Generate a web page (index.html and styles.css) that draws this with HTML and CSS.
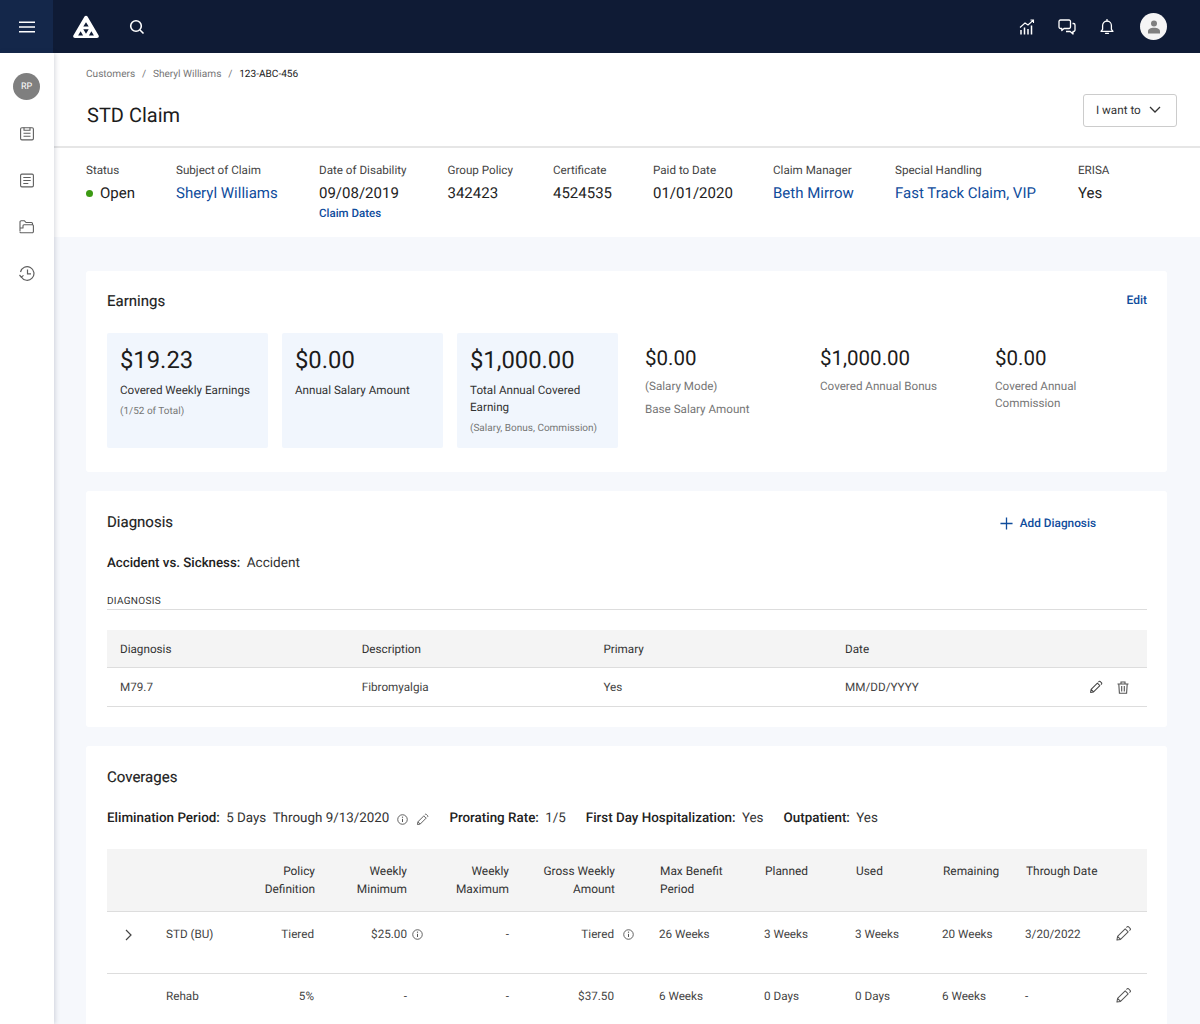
FILE: index.html
```html
<!DOCTYPE html>
<html lang="en">
<head>
<meta charset="utf-8">
<title>STD Claim</title>
<link rel="stylesheet" href="styles.css">
</head>
<body>
<svg class="defs" width="0" height="0" aria-hidden="true">
  <symbol id="pencil" viewBox="0 0 16 16"><path d="M1.800 14.200l.6-3.400 7.200-7.200 2.800 2.800-7.200 7.200zM2.400 10.800l2.800 2.800M10.800 2.400l.8-.8a.7.7 0 0 1 1 0l1.800 1.800a.7.7 0 0 1 0 1l-.8.8" fill="none" stroke="currentColor" stroke-linejoin="round"/></symbol>
  <symbol id="info" viewBox="0 0 12 12"><circle cx="6" cy="6" r="5.200" fill="none" stroke="currentColor" stroke-width="1"/><path d="M6 5.300v3.400" stroke="currentColor" stroke-width="1.100"/><circle cx="6" cy="3.500" r=".7" fill="currentColor"/></symbol>
</svg>
<header class="topbar">
  <div class="menu-cell">
    <svg width="16" height="12" viewBox="0 0 16 12"><path d="M0 1.200h16M0 6h16M0 10.800h16" stroke="#fff" stroke-width="1.500"/></svg>
  </div>
  <svg class="logo" width="26" height="24" viewBox="1 0 26 24"><path d="M14 .8c.7 0 1.200.3 1.500.8l11 18.600c.8 1.300.1 2.800-1.500 2.800H3c-1.600 0-2.300-1.500-1.500-2.800l11-18.600c.3-.5.800-.8 1.500-.8z" fill="#fff"/><path d="M14 7.200l2.700 4.400h-5.400zM11.300 14.200h5.400L14 18.800zM8.600 16.200l2.500 4.300h-5zM19.400 16.200l2.500 4.300h-5z" fill="#0f1b35"/></svg>
  <svg class="search" width="16" height="16" viewBox="0 0 16 16"><circle cx="7" cy="7" r="5.300" fill="none" stroke="#fff" stroke-width="1.600"/><path d="M11 11l3.500 3.500" stroke="#fff" stroke-width="1.600"/></svg>
  <div class="top-actions">
    <svg width="16" height="16" viewBox="0 0 16 16" fill="none" stroke="#fff"><path d="M1 8.500l5-4.500 3 2 5.500-5M11.500 1h3v3" stroke-width="1.100"/><path d="M2 11v4.500M5.500 8.500v7M9 10v5.500M12.500 6.500v9" stroke-width="1.500"/></svg>
    <svg width="18" height="16" viewBox="0 0 18 16" fill="none" stroke="#fff" stroke-width="1.300" stroke-linejoin="round"><path d="M2.500 1h8.500a1.500 1.500 0 0 1 1.500 1.500v5.500A1.500 1.500 0 0 1 11 9.500H6l-2.200 2V9.500H2.500A1.500 1.500 0 0 1 1 8V2.500A1.500 1.500 0 0 1 2.500 1z"/><path d="M14.500 4.500h1a1.500 1.500 0 0 1 1.500 1.500v5a1.500 1.500 0 0 1-1.500 1.500H15v2.500l-2.800-2.500H8"/></svg>
    <svg width="14" height="16" viewBox="0 0 14 16" fill="none" stroke="#fff" stroke-width="1.300"><path d="M1 12.300h12l-1.600-2V6.500a4.400 4.400 0 0 0-8.800 0v3.800z" stroke-linejoin="round"/><path d="M7 .5v1.500M5.500 14.300h3" stroke-linecap="round"/></svg>
    <div class="user-circle">
      <svg width="12" height="14" viewBox="0 0 12 14" fill="#808080"><circle cx="6" cy="3.500" r="3"/><path d="M0 13.500v-2.200C0 9 2.500 7.800 6 7.800s6 1.200 6 3.500v2.200z"/></svg>
    </div>
  </div>
</header>
<div class="shell">
  <nav class="sidebar">
    <div class="avatar">RP</div>
    <svg width="14" height="14" viewBox="0 0 14 14" fill="none" stroke="#5f5f5f" stroke-width="1.100"><rect x=".6" y="1.200" width="12.800" height="12.200" rx="1.300"/><path d="M4 1v2.800h6V1M3.500 6.800h7M3.500 9.800h7"/></svg>
    <svg width="14" height="14" viewBox="0 0 14 14" fill="none" stroke="#5f5f5f" stroke-width="1.100"><rect x=".6" y=".6" width="12.800" height="12.800" rx="1.300"/><path d="M3.300 4h7.400M3.300 7h7.400M3.300 10h5"/></svg>
    <svg width="15" height="14" viewBox="0 0 15 14" fill="none" stroke="#5f5f5f" stroke-width="1.100" stroke-linejoin="round"><path d="M1 12V2.500A1.200 1.200 0 0 1 2.200 1.300h3.300l1.500 1.700h5.500a1 1 0 0 1 1 1v1M1 12.500a.8.800 0 0 0 .8.800h11.400a1.200 1.200 0 0 0 1.200-1.200V6.300a1 1 0 0 0-1-1H5a1 1 0 0 0-1 1v2.200H1"/></svg>
    <svg width="16" height="16" viewBox="0 0 16 16" fill="none" stroke="#5f5f5f" stroke-width="1.200"><path d="M2.300 11.500A6.800 6.800 0 1 0 1.500 6.500"/><path d="M8.500 4v4.300h3.500M.5 9.500l1.800 2.200 2.200-1.800"/></svg>
  </nav>
  <main class="main">
    <section class="page-head">
      <div class="crumbs">
        <span>Customers</span><i>/</i><span>Sheryl Williams</span><i>/</i><b>123-ABC-456</b>
      </div>
      <div class="title-row">
        <h1>STD Claim</h1>
        <button class="want" type="button">I want to
          <svg width="12" height="7" viewBox="0 0 12 7"><path d="M1 1l5 5 5-5" fill="none" stroke="#333" stroke-width="1.300"/></svg>
        </button>
      </div>
    </section>
    <section class="summary">
      <div class="fact f-status"><label>Status</label><p class="open"><span class="dot"></span>Open</p></div>
      <div class="fact f-subject"><label>Subject of Claim</label><p class="link">Sheryl Williams</p></div>
      <div class="fact f-date"><label>Date of Disability</label><p>09/08/2019</p><a>Claim Dates</a></div>
      <div class="fact f-group"><label>Group Policy</label><p>342423</p></div>
      <div class="fact f-cert"><label>Certificate</label><p>4524535</p></div>
      <div class="fact f-paid"><label>Paid to Date</label><p>01/01/2020</p></div>
      <div class="fact f-mgr"><label>Claim Manager</label><p class="link">Beth Mirrow</p></div>
      <div class="fact f-special"><label>Special Handling</label><p class="link">Fast Track Claim, VIP</p></div>
      <div class="fact"><label>ERISA</label><p>Yes</p></div>
    </section>
    <div class="content">
      <section class="card earnings">
        <div class="card-head"><h2>Earnings</h2><a class="edit">Edit</a></div>
        <div class="tiles">
          <div class="tile"><strong>$19.23</strong><p>Covered Weekly Earnings</p><small>(1/52 of Total)</small></div>
          <div class="tile"><strong>$0.00</strong><p>Annual Salary Amount</p></div>
          <div class="tile"><strong>$1,000.00</strong><p>Total Annual Covered Earning</p><small>(Salary, Bonus, Commission)</small></div>
          <div class="stat"><strong>$0.00</strong><p>(Salary Mode)</p><p class="gap">Base Salary Amount</p></div>
          <div class="stat"><strong>$1,000.00</strong><p>Covered Annual Bonus</p></div>
          <div class="stat"><strong>$0.00</strong><p>Covered Annual Commission</p></div>
        </div>
      </section>
      <section class="card diagnosis">
        <div class="card-head">
          <h2>Diagnosis</h2>
          <a class="add"><svg width="13" height="13" viewBox="0 0 14 14"><path d="M7 .5v13M.5 7h13" stroke="#0f4c9c" stroke-width="1.400"/></svg>Add Diagnosis</a>
        </div>
        <p class="kv-line"><b>Accident vs. Sickness:</b> Accident</p>
        <h3>DIAGNOSIS</h3>
        <div class="d-table d-head"><span>Diagnosis</span><span>Description</span><span>Primary</span><span>Date</span></div>
        <div class="d-table d-row"><span>M79.7</span><span>Fibromyalgia</span><span>Yes</span><span>MM/DD/YYYY</span>
          <div class="row-icons">
            <svg class="ic14" aria-hidden="true"><use href="#pencil"/></svg>
            <svg width="12" height="13" viewBox="0 0 12 13" fill="none" stroke="#555" stroke-width="1.100"><path d="M.5 3h11M4 3V1h4v2M1.800 3l.6 9.300h7.200L10.200 3M4.700 5v5.500M7.300 5v5.500"/></svg>
          </div>
        </div>
      </section>
      <section class="card coverages">
        <h2>Coverages</h2>
        <div class="terms">
          <span><b>Elimination Period:</b> 5 Days&nbsp; Through 9/13/2020</span>
          <svg class="ic11 t-info" aria-hidden="true"><use href="#info"/></svg>
          <svg class="ic13 t-edit" aria-hidden="true"><use href="#pencil"/></svg>
          <span class="t-next"><b>Prorating Rate:</b> 1/5</span>
          <span><b>First Day Hospitalization:</b> Yes</span>
          <span><b>Outpatient:</b> Yes</span>
        </div>
        <div class="c-table c-head">
          <span></span><span></span>
          <span class="r">Policy<br>Definition</span><span class="r">Weekly<br>Minimum</span><span class="r">Weekly<br>Maximum</span><span class="r">Gross Weekly<br>Amount</span>
          <span class="first">Max Benefit<br>Period</span><span>Planned</span><span>Used</span><span>Remaining</span><span>Through Date</span><span></span>
        </div>
        <div class="c-table c-row">
          <span class="chev"><svg width="7" height="12" viewBox="0 0 7 12"><path d="M1 1l5 5-5 5" fill="none" stroke="#444" stroke-width="1.200"/></svg></span>
          <span>STD (BU)</span><span class="r">Tiered</span>
          <span class="r">$25.00<svg class="ic11 cell-info" aria-hidden="true"><use href="#info"/></svg></span>
          <span class="r">-</span>
          <span class="r">Tiered<svg class="ic11 cell-info wide" aria-hidden="true"><use href="#info"/></svg></span>
          <span class="first">26 Weeks</span><span>3 Weeks</span><span>3 Weeks</span><span>20 Weeks</span><span>3/20/2022</span>
          <svg class="ic16" aria-hidden="true"><use href="#pencil"/></svg>
        </div>
        <div class="c-table c-row">
          <span></span><span>Rehab</span><span class="r">5%</span><span class="r">-</span><span class="r">-</span><span class="r">$37.50</span>
          <span class="first">6 Weeks</span><span>0 Days</span><span>0 Days</span><span>6 Weeks</span><span>-</span>
          <svg class="ic16" aria-hidden="true"><use href="#pencil"/></svg>
        </div>
      </section>
    </div>
  </main>
</div>
</body>
</html>
```
FILE: styles.css
```css
* { box-sizing: border-box; }
html, body { height: 1024px; overflow: hidden; }
body { margin: 0; font-family: Roboto, "Liberation Sans", sans-serif; color: #222; background: #fff; text-rendering: geometricPrecision; }
.defs { position: absolute; }
h1, h2, h3, p { margin: 0; font-weight: 400; }
b { font-weight: 500; }

.topbar { height: 53px; background: #0f1b35; display: flex; align-items: center; }
.menu-cell { width: 53px; height: 53px; background: #14274a; display: flex; align-items: center; justify-content: center; }
.logo { margin-left: 20px; }
.search { margin-left: 30px; }
.top-actions { margin-left: auto; display: flex; align-items: center; padding-right: 33px; gap: 24px; }
.top-actions svg:nth-child(2) { margin-left: -1px; }
.user-circle { width: 27px; height: 27px; border-radius: 50%; background: #f5f5f5; display: flex; align-items: center; justify-content: center; margin-left: 2px; }

.shell { display: flex; height: 971px; }
.sidebar { width: 54px; flex: none; background: #fff; box-shadow: 1px 0 5px rgba(40, 50, 80, .2); position: relative; display: flex; flex-direction: column; align-items: center; padding-top: 20px; padding-right: 1px; }
.sidebar svg { margin-top: 26px; display: block; height: 21px; }
.sidebar svg:nth-of-type(3) { margin-top: 25px; }
.sidebar svg:last-child { margin-top: 26px; }
.sidebar .avatar + svg { margin-top: 23px; }
.avatar { width: 27px; height: 27px; border-radius: 50%; background: #7f7f7f; color: #fff; font-size: 9px; font-weight: 400; display: flex; align-items: center; justify-content: center; }
.main { flex: 1; min-width: 0; background: #f6f8fc; }

.page-head { height: 95px; background: #fff; border-bottom: 2px solid #e6e6e6; padding: 15px 23px 0 33px; }
.crumbs { font-size: 10.100px; line-height: 14px; color: #767676; display: flex; margin-left: -1px; }
.crumbs i { font-style: normal; margin: 0 6.800px; }
.crumbs b { font-weight: 400; color: #222; }
.title-row { display: flex; justify-content: space-between; align-items: flex-start; margin-top: 11px; }
h1 { font-size: 20px; line-height: 30px; color: #1c1c1c; margin-top: 7px; }
.want { width: 94px; height: 33px; border: 1px solid #ccc; border-radius: 3px; background: #fff; font: 11.700px Roboto, sans-serif; text-rendering: geometricPrecision; color: #333; display: flex; align-items: center; gap: 8px; margin-top: 1px; padding: 0 0 2px 12px; }

.summary { height: 89px; background: #fff; display: flex; padding: 15px 0 0 32px; }
.fact label { display: block; font-size: 11.650px; line-height: 15px; color: #444; }
.fact p { font-size: 15px; line-height: 18px; margin-top: 6px; color: #222; white-space: nowrap; }
.fact a { display: block; font-size: 11.500px; font-weight: 500; line-height: 14px; margin-top: 4px; color: #0f4c9c; }
.fact p.link { color: #0f4c9c; }
.open { display: flex; align-items: center; }
.dot { width: 7px; height: 7px; border-radius: 50%; background: #3c9a13; margin-right: 7px; }
.f-status { width: 90px; }
.f-subject { width: 143px; }
.f-date { width: 128.500px; }
.f-group { width: 105.500px; }
.f-cert { width: 100px; }
.f-paid { width: 120px; }
.f-mgr { width: 122px; }
.f-special { width: 183px; }

.content { padding: 34px 33px 0 32px; display: flex; flex-direction: column; gap: 19px; }
.card { background: #fff; border-radius: 3px; padding: 0 20px 0 21px; }
.card-head { display: flex; justify-content: space-between; }
h2 { font-size: 15px; line-height: 18px; font-weight: 400; color: #222; -webkit-text-stroke: .15px #222; }

.earnings { height: 201px; padding-top: 21px; }
.edit { font-size: 12px; font-weight: 500; line-height: 14px; color: #0f4c9c; margin-top: 1px; }
.tiles { display: flex; gap: 14px; margin-top: 23px; }
.tile { width: 161px; height: 115px; background: #f1f6fd; border-radius: 2px; padding: 14px 13px 0; }
.tile strong, .stat strong { display: block; font-size: 23.800px; line-height: 26px; font-weight: 400; color: #1c1c1c; }
.tile p { font-size: 11.650px; line-height: 17px; margin-top: 9px; color: #333; }
.tile small { display: block; font-size: 10px; line-height: 13px; margin-top: 6px; color: #767676; }
.stat { width: 161px; padding: 13px 13px 0; color: #767676; }
.stat strong { font-size: 20.500px; line-height: 26px; margin-bottom: 6px; }
.stat p { font-size: 11.650px; line-height: 17px; color: #767676; }
.stat p.gap { margin-top: 6px; }

.diagnosis { height: 236px; padding-top: 22px; }
.add { display: flex; align-items: center; gap: 7px; font-size: 11.800px; font-weight: 500; line-height: 18px; color: #0f4c9c; margin: 0 51px 0 0; position: relative; top: 1px; }
.kv-line { font-size: 13.600px; line-height: 18px; margin-top: 23px; color: #333; }
.kv-line b { color: #222; margin-right: 3px; font-size: 13.300px; }
h3 { font-size: 10px; line-height: 12px; letter-spacing: .3px; margin-top: 23px; padding-bottom: 2px; border-bottom: 1px solid #ddd; height: 14px; color: #333; }
.d-table { display: grid; grid-template-columns: 241.700px 241.700px 241.700px 1fr; align-items: center; padding: 0 13px; font-size: 11.700px; color: #444; position: relative; }
.d-head { margin-top: 20px; height: 38px; background: #f4f4f4; border-bottom: 1px solid #ddd; color: #333; }
.d-row { height: 39px; border-bottom: 1px solid #ddd; }
.row-icons { position: absolute; right: 18px; top: 12px; display: flex; gap: 14px; color: #444; align-items: center; }
.ic14 { width: 14px; height: 14px; stroke-width: 1.150px; }
.ic11 { width: 11px; height: 11px; color: #555; }
.ic13 { width: 13px; height: 13px; color: #555; stroke-width: 1.150px; }
.ic16 { width: 17px; height: 17px; color: #555; margin: 0; stroke-width: .95px; }

.coverages { height: 300px; padding-top: 22px; }
.terms { display: flex; align-items: center; font-size: 13.400px; line-height: 18px; margin-top: 24px; color: #333; }
.terms b { color: #222; margin-right: 3px; }
.terms > span + span { margin-left: 20px; }
.t-info { margin-left: 8px; }
.t-edit { margin-left: 8px; }
.terms > span.t-next { margin-left: 20px; }
.c-table { display: grid; grid-template-columns: 59px 80px 69px 92px 102px 106px 150px 91px 87px 83px 89px 1fr; font-size: 11.700px; line-height: 18px; color: #444; position: relative; }
.c-head { margin-top: 21px; height: 63px; background: #f4f4f4; border-bottom: 1px solid #ddd; padding-top: 13px; color: #333; font-size: 11.900px; }
.c-row { height: 62px; border-bottom: 1px solid #ddd; padding-top: 13px; }
.r { text-align: right; }
.first { padding-left: 45px; }
.c-row span:not(.r) { margin-left: -1px; }
.c-row span:nth-child(2) { margin-left: 0; }
.c-row span:nth-child(3), .c-row span:nth-child(6) { margin-right: 1px; }
.c-row .chev { padding-left: 19px; padding-top: 3px; }
.cell-info { margin: 0 -16px 0 5px; vertical-align: -2px; }
.cell-info.wide { margin: 0 -20px 0 9px; }
```
